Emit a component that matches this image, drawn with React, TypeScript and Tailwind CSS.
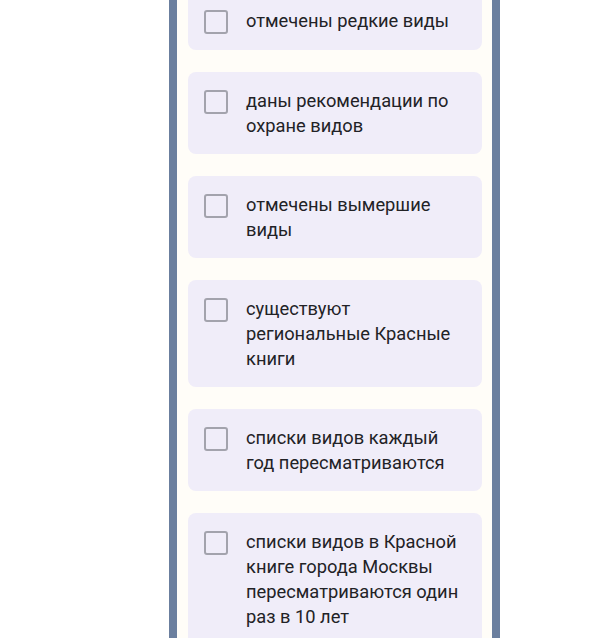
import React from "react";

const items = [
  "отмечены редкие виды",
  "даны рекомендации по охране видов",
  "отмечены вымершие виды",
  "существуют региональные Красные книги",
  "списки видов каждый год пересматриваются",
  "списки видов в Красной книге города Москвы пересматриваются один раз в 10 лет",
];

export default function App() {
  return (
    <div className="w-[592px] h-[638px] overflow-hidden bg-white flex" style={{ fontFamily: "Roboto, 'Noto Sans', sans-serif" }}>
      <div className="ml-[169px] w-[331px] h-full flex border-x-[8px] border-[#6b7f9e] bg-[#fffdf8]">
        <div className="flex-1 px-[10px] pl-[11px] flex flex-col gap-[22px] mt-[-8px]">
          {items.map((t, i) => (
            <div key={i} className="flex items-start rounded-[8px] bg-[#f0edf9] px-[16px] py-[16px] shrink-0">
              <div className="mt-[2px] w-[24px] h-[24px] shrink-0 rounded-[3px] border-2 border-[#a3a3ad] bg-[#f0edf9]" />
              <div className="ml-[18px] text-[18.3px] leading-[25px] text-[#222226]">{t}</div>
            </div>
          ))}
        </div>
      </div>
    </div>
  );
}
